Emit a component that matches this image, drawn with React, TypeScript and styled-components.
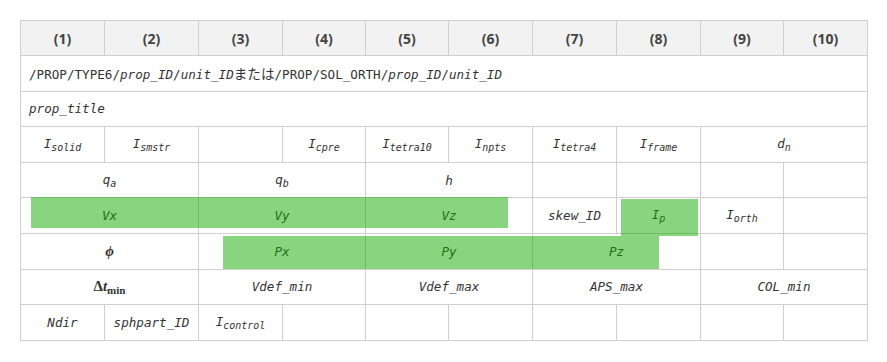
import React from "react";
import styled, { createGlobalStyle } from "styled-components";

const Global = createGlobalStyle`
  html, body { margin: 0; padding: 0; background: #fff; }
  body { font-family: "Open Sans", "Noto Sans CJK JP", sans-serif; color: #333; }
`;

const Page = styled.div`
  padding: 20px 20px 0 20px;
`;

const Frame = styled.div`
  position: relative;
  width: 847px;
`;

const Table = styled.table`
  border-collapse: collapse;
  table-layout: fixed;
  width: 847px;
`;

const Head = styled.th`
  background: #f2f2f2;
  border: 1px solid #cfcfcf;
  height: 34px;
  padding: 0;
  font-family: "Open Sans", sans-serif;
  font-weight: 700;
  font-size: 14px;
  color: #444;
  text-align: center;
`;

const Cell = styled.td<{ $left?: boolean }>`
  border: 1px solid #cfcfcf;
  height: 34.6px;
  padding: 0 ${(p) => (p.$left ? "8px" : "4px")};
  text-align: ${(p) => (p.$left ? "left" : "center")};
  font-family: "DejaVu Sans Mono", "Noto Sans CJK JP", monospace;
  font-size: 12.6px;
  color: #333;
  white-space: nowrap;
`;

const It = styled.i`
  font-style: italic;
`;

const Up = styled.span`
  font-style: normal;
`;

const Jp = styled.span`
  font-family: "Noto Sans CJK JP", sans-serif;
  font-style: normal;
  font-size: 13.6px;
`;

const Sub = styled.sub`
  font-size: 10px;
  vertical-align: -3px;
  font-style: italic;
`;

const MathBold = styled.span`
  font-family: "Liberation Serif", "DejaVu Serif", serif;
  font-weight: 700;
  font-size: 15px;
  color: #333;
`;

const MathSub = styled.sub`
  font-size: 11px;
  font-style: normal;
  vertical-align: -3px;
`;

const Highlight = styled.div<{ $x: number; $y: number; $w: number; $h: number }>`
  position: absolute;
  left: ${(p) => p.$x}px;
  top: ${(p) => p.$y}px;
  width: ${(p) => p.$w}px;
  height: ${(p) => p.$h}px;
  background: rgba(18, 170, 0, 0.5);
  pointer-events: none;
`;

const widths = [84, 94, 84, 83, 83, 84, 84, 84, 83, 84];

const Sym = ({ b, s }: { b: string; s: string }) => (
  <It>
    {b}
    <Sub>{s}</Sub>
  </It>
);

export default function App() {
  return (
    <Page>
      <Global />
      <Frame>
        <Table>
          <colgroup>
            {widths.map((w, i) => (
              <col key={i} style={{ width: w }} />
            ))}
          </colgroup>
          <thead>
            <tr>
              {widths.map((_, i) => (
                <Head key={i}>({i + 1})</Head>
              ))}
            </tr>
          </thead>
          <tbody>
            <tr>
              <Cell colSpan={10} $left>
                <Up>/PROP/TYPE6/</Up>
                <It>prop_ID</It>/<It>unit_ID</It>
                <Jp>または</Jp>
                <Up>/PROP/SOL_ORTH/</Up>
                <It>prop_ID</It>/<It>unit_ID</It>
              </Cell>
            </tr>
            <tr>
              <Cell colSpan={10} $left>
                <It>prop_title</It>
              </Cell>
            </tr>
            <tr>
              <Cell><Sym b="I" s="solid" /></Cell>
              <Cell><Sym b="I" s="smstr" /></Cell>
              <Cell />
              <Cell><Sym b="I" s="cpre" /></Cell>
              <Cell><Sym b="I" s="tetra10" /></Cell>
              <Cell><Sym b="I" s="npts" /></Cell>
              <Cell><Sym b="I" s="tetra4" /></Cell>
              <Cell><Sym b="I" s="frame" /></Cell>
              <Cell colSpan={2}><Sym b="d" s="n" /></Cell>
            </tr>
            <tr>
              <Cell colSpan={2}><Sym b="q" s="a" /></Cell>
              <Cell colSpan={2}><Sym b="q" s="b" /></Cell>
              <Cell colSpan={2}><It>h</It></Cell>
              <Cell />
              <Cell />
              <Cell />
              <Cell />
            </tr>
            <tr>
              <Cell colSpan={2}><It>Vx</It></Cell>
              <Cell colSpan={2}><It>Vy</It></Cell>
              <Cell colSpan={2}><It>Vz</It></Cell>
              <Cell><It>skew_ID</It></Cell>
              <Cell><Sym b="I" s="p" /></Cell>
              <Cell><Sym b="I" s="orth" /></Cell>
              <Cell />
            </tr>
            <tr>
              <Cell colSpan={2}>
                <MathBold><i>ϕ</i></MathBold>
              </Cell>
              <Cell colSpan={2}><It>Px</It></Cell>
              <Cell colSpan={2}><It>Py</It></Cell>
              <Cell colSpan={2}><It>Pz</It></Cell>
              <Cell />
              <Cell />
            </tr>
            <tr>
              <Cell colSpan={2}>
                <MathBold>
                  Δ<i>t</i>
                  <MathSub>min</MathSub>
                </MathBold>
              </Cell>
              <Cell colSpan={2}><It>Vdef_min</It></Cell>
              <Cell colSpan={2}><It>Vdef_max</It></Cell>
              <Cell colSpan={2}><It>APS_max</It></Cell>
              <Cell colSpan={2}><It>COL_min</It></Cell>
            </tr>
            <tr>
              <Cell><It>Ndir</It></Cell>
              <Cell><It>sphpart_ID</It></Cell>
              <Cell><Sym b="I" s="control" /></Cell>
              <Cell />
              <Cell />
              <Cell />
              <Cell />
              <Cell />
              <Cell />
              <Cell />
            </tr>
          </tbody>
        </Table>
        <Highlight $x={11} $y={177} $w={477} $h={31} />
        <Highlight $x={601} $y={179} $w={77} $h={37} />
        <Highlight $x={203} $y={216} $w={436} $h={33} />
      </Frame>
    </Page>
  );
}
